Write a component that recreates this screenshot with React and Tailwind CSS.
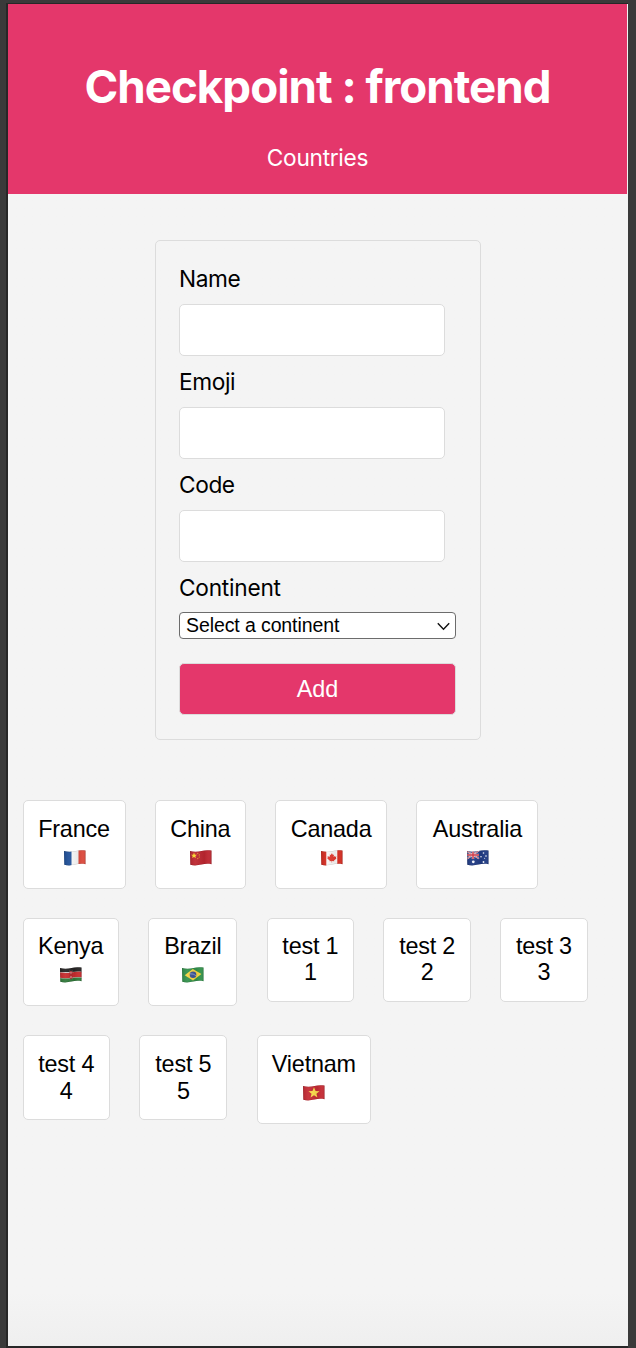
const WAVE = "M0 1C4 2 8 1.8 11.5 .9S18 -.1 21.5 .6V14.3C18 13.6 15 13.8 11.5 14.6S4 15.8 .3 14.8Z";

const STAR = "M0-5L1.4-1.6L5-1.5L2.2.8L3.1 4.2L0 2.2L-3.1 4.2L-2.2.8L-5-1.5L-1.4-1.6Z";

const art = {
  fr: (
    <>
      <path fill="#f8f8f8" d="M0 0h22v16H0z" />
      <path fill="#1f5099" d="M0 0h7.5v16H0z" />
      <path fill="#dc4a3d" d="M14.5 0H22v16h-7.5z" />
    </>
  ),
  cn: (
    <>
      <path fill="#bd2630" d="M0 0h22v16H0z" />
      <path fill="#ffdd2e" d={STAR} transform="translate(4 5.6) scale(.6)" />
      <g fill="#e9ac2d">
        <circle cx="7.8" cy="3.3" r=".6" />
        <circle cx="9.3" cy="4.9" r=".6" />
        <circle cx="9.3" cy="7" r=".6" />
        <circle cx="7.8" cy="8.6" r=".6" />
      </g>
    </>
  ),
  ca: (
    <>
      <path fill="#f9f7f6" d="M0 0h22v16H0z" />
      <path fill="#d32b20" d="M0 0h5.3v16H0zM16.3 0H22v16h-5.7z" />
      <path
        fill="#e23a30"
        d="M10.9 3.2l1.1 1.9 1-.5-.4 2.5 1.3-1.2.3.8 1.2-.2-.5 1.6.6.4-2.5 2 .2.8-2.1-.3v1.6h-.5V11l-2.1.3.2-.8-2.5-2 .6-.4-.5-1.6 1.2.2.3-.8 1.3 1.2-.4-2.5 1 .5z"
      />
    </>
  ),
  au: (
    <>
      <path fill="#203b84" d="M0 0h22v16H0z" />
      <path stroke="#e9dfe7" strokeWidth="1.6" d="M0 1.2L12 8.6M0 8.8L12 .6" />
      <path stroke="#cf3a4a" strokeWidth=".7" d="M0 1.2L12 8.6M0 8.8L12 .6" />
      <path stroke="#eee3e9" strokeWidth="2.4" d="M6 0v9M0 5h12" />
      <path stroke="#ce3341" strokeWidth="1.5" d="M6 0v9M0 5h12" />
      <g fill="#f2f4fb">
        <circle cx="6.3" cy="11.8" r="1.4" />
        <circle cx="16.5" cy="3" r=".8" />
        <circle cx="14" cy="6.8" r=".8" />
        <circle cx="19" cy="6" r=".8" />
        <circle cx="17.6" cy="8.2" r=".5" />
        <circle cx="16.5" cy="12" r=".9" />
      </g>
    </>
  ),
  ke: (
    <>
      <path fill="#262424" d="M0 0h22v5.3H0z" />
      <path fill="#d8c4c2" d="M0 5.1C5 5.8 8 5.6 11.5 5S18 4.2 22 4.7V12H0z" />
      <path fill="#c72b2e" d="M0 5.5C5 6.2 8 6 11.5 5.4S18 4.6 22 5.1V10.3C18 9.7 15 10 11.5 10.6S4 11.4 0 10.8z" />
      <path fill="#31793a" d="M0 11.2C5 11.8 8 11.6 11.5 11S18 10.2 22 10.7V16H0z" />
      <path stroke="#c99f9b" strokeWidth=".5" d="M9.8 3.6l2.4 8.6M12.2 3.6L9.8 12.2" />
      <ellipse cx="11" cy="7.9" rx="1.7" ry="4" fill="#b3262c" />
      <path stroke="#efe0dc" strokeWidth=".8" d="M11 4.8v1.8M11 9.2V11" />
    </>
  ),
  br: (
    <>
      <path fill="#32914b" d="M0 0h22v16H0z" />
      <path fill="#f6d440" d="M10.8 1.9L19.4 7.1 11 13.5 2.7 8.3z" />
      <circle cx="11" cy="7.7" r="3.3" fill="#3a5296" />
      <path stroke="#b9c4da" strokeWidth=".6" fill="none" d="M8 6.8Q11.5 6.5 14 8.7" />
    </>
  ),
  vn: (
    <>
      <path fill="#c52b34" d="M0 0h22v16H0z" />
      <path fill="#fbdc4c" d={STAR} transform="translate(11 7.8) scale(1.1)" />
    </>
  ),
};

function Flag({ code }) {
  return (
    <svg viewBox="0 0 22 16" className="h-4 w-[22px]" fill="none">
      <defs>
        <clipPath id={`wave-${code}`}>
          <path d={WAVE} />
        </clipPath>
        <linearGradient id={`shade-${code}`}>
          <stop offset="0" stopColor="#000" stopOpacity=".1" />
          <stop offset=".25" stopColor="#fff" stopOpacity=".06" />
          <stop offset=".65" stopColor="#000" stopOpacity=".06" />
          <stop offset=".85" stopColor="#fff" stopOpacity=".04" />
          <stop offset="1" stopColor="#000" stopOpacity=".12" />
        </linearGradient>
      </defs>
      <g clipPath={`url(#wave-${code})`}>
        {art[code]}
        <path fill={`url(#shade-${code})`} d="M0 0h22v16H0z" />
        <path d={WAVE} stroke="#000" strokeOpacity=".16" strokeWidth="1" />
      </g>
    </svg>
  );
}

const rows = [
  {
    pad: "pt-[15px]",
    cards: [
      { name: "France", flag: "fr", width: "w-[103px]" },
      { name: "China", flag: "cn", width: "w-[91px]" },
      { name: "Canada", flag: "ca", width: "w-[112px]" },
      { name: "Australia", flag: "au", width: "w-[122px]" },
    ],
  },
  {
    pad: "pt-[14px]",
    cards: [
      { name: "Kenya", flag: "ke", width: "w-[96.5px]" },
      { name: "Brazil", flag: "br", width: "w-[89px]" },
      { name: "test 1", text: "1", width: "w-[87.5px]" },
      { name: "test 2", text: "2", width: "w-[87.5px]" },
      { name: "test 3", text: "3", width: "w-[87.5px]" },
    ],
  },
  {
    pad: "pt-[15px]",
    cards: [
      { name: "test 4", text: "4", width: "w-[87.5px]" },
      { name: "test 5", text: "5", width: "w-[88px]" },
      { name: "Vietnam", flag: "vn", width: "w-[114.5px]" },
    ],
  },
];

function Card({ name, flag, text, width, pad }) {
  return (
    <a
      className={`${width} ${pad} ${flag ? "h-[88.5px]" : "h-[84.5px]"} flex flex-col items-center whitespace-nowrap rounded-[5px] border-[1.5px] border-[#dcdcdc] bg-white text-[23.4px] leading-[27px] tracking-[-0.2px] text-black`}
    >
      <span>{name}</span>
      {flag ? (
        <span className="flex h-[30px] items-center pl-px">
          <Flag code={flag} />
        </span>
      ) : (
        <span className="-mt-[0.5px] leading-[27px]">{text}</span>
      )}
    </a>
  );
}

function Field({ label }) {
  return (
    <label className="flex h-[103px] flex-col">
      <span className="h-[39px] font-[Inter,sans-serif] text-[22.7px] leading-[28px] tracking-[-0.4px]">{label}</span>
      <input className="h-[52px] w-[266px] rounded-[5px] border-[1.5px] border-[#dcdcdc] bg-white px-3 outline-none" />
    </label>
  );
}

export default function App() {
  return (
    <div className="h-[1348px] w-[636px] bg-[#3a3a3a] pl-[6px] pt-[3px] font-['Liberation_Sans',Arial,sans-serif] text-black">
      <div className="h-[1345px] w-[622px] border-b-2 border-l-2 border-t border-[#272727] bg-linear-to-b from-[#f4f4f4] from-[96%] to-[#efefef]">
        <header className="mr-px flex h-[190px] flex-col items-center bg-[#e4376b] pt-[54px] font-[Inter,sans-serif] text-white">
          <h1 className="whitespace-nowrap text-[45.7px] font-bold leading-[58px] tracking-[-1px]">Checkpoint : frontend</h1>
          <p className="mt-[28px] text-[22.7px] leading-[28px] tracking-[-0.3px]">Countries</p>
        </header>
        <main>
          <form className="ml-[147px] mt-[46px] h-[500px] w-[326px] rounded-[5px] border-[1.5px] border-[#dcdcdc] px-[23px] pt-6">
            <Field label="Name" />
            <Field label="Emoji" />
            <Field label="Code" />
            <div className="flex flex-col">
              <span className="h-[38px] font-[Inter,sans-serif] text-[22.7px] leading-[28px] tracking-[-0.25px]">Continent</span>
              <button type="button" className="flex h-[27px] w-[277px] items-center justify-between rounded-[4px] border-[1.5px] border-[#6c6c6c] bg-white pl-[6px] pr-[5px] text-[19.5px] tracking-[-0.1px]">
                <span className="pt-px">Select a continent</span>
                <svg viewBox="0 0 13 9" className="mt-px h-[9px] w-[13px]" fill="none">
                  <path d="M.8 1.2L6.5 7.2L12.2 1.2" stroke="#111" strokeWidth="1.4" />
                </svg>
              </button>
              <button type="button" className="mt-[24px] h-[52px] w-[277px] shrink-0 rounded-[5px] border-[1.5px] border-[#dcdcdc] bg-[#e4376b] text-[23.4px] leading-[27px] text-white">
                Add
              </button>
            </div>
          </form>
          <section className="ml-[14.5px] mt-[60px] flex flex-col">
            {rows.map(({ pad, cards }, i) => (
              <div key={i} className="flex h-[117.5px] items-start gap-[29.3px]">
                {cards.map((c) => (
                  <Card key={c.name} pad={pad} {...c} />
                ))}
              </div>
            ))}
          </section>
        </main>
      </div>
    </div>
  );
}
